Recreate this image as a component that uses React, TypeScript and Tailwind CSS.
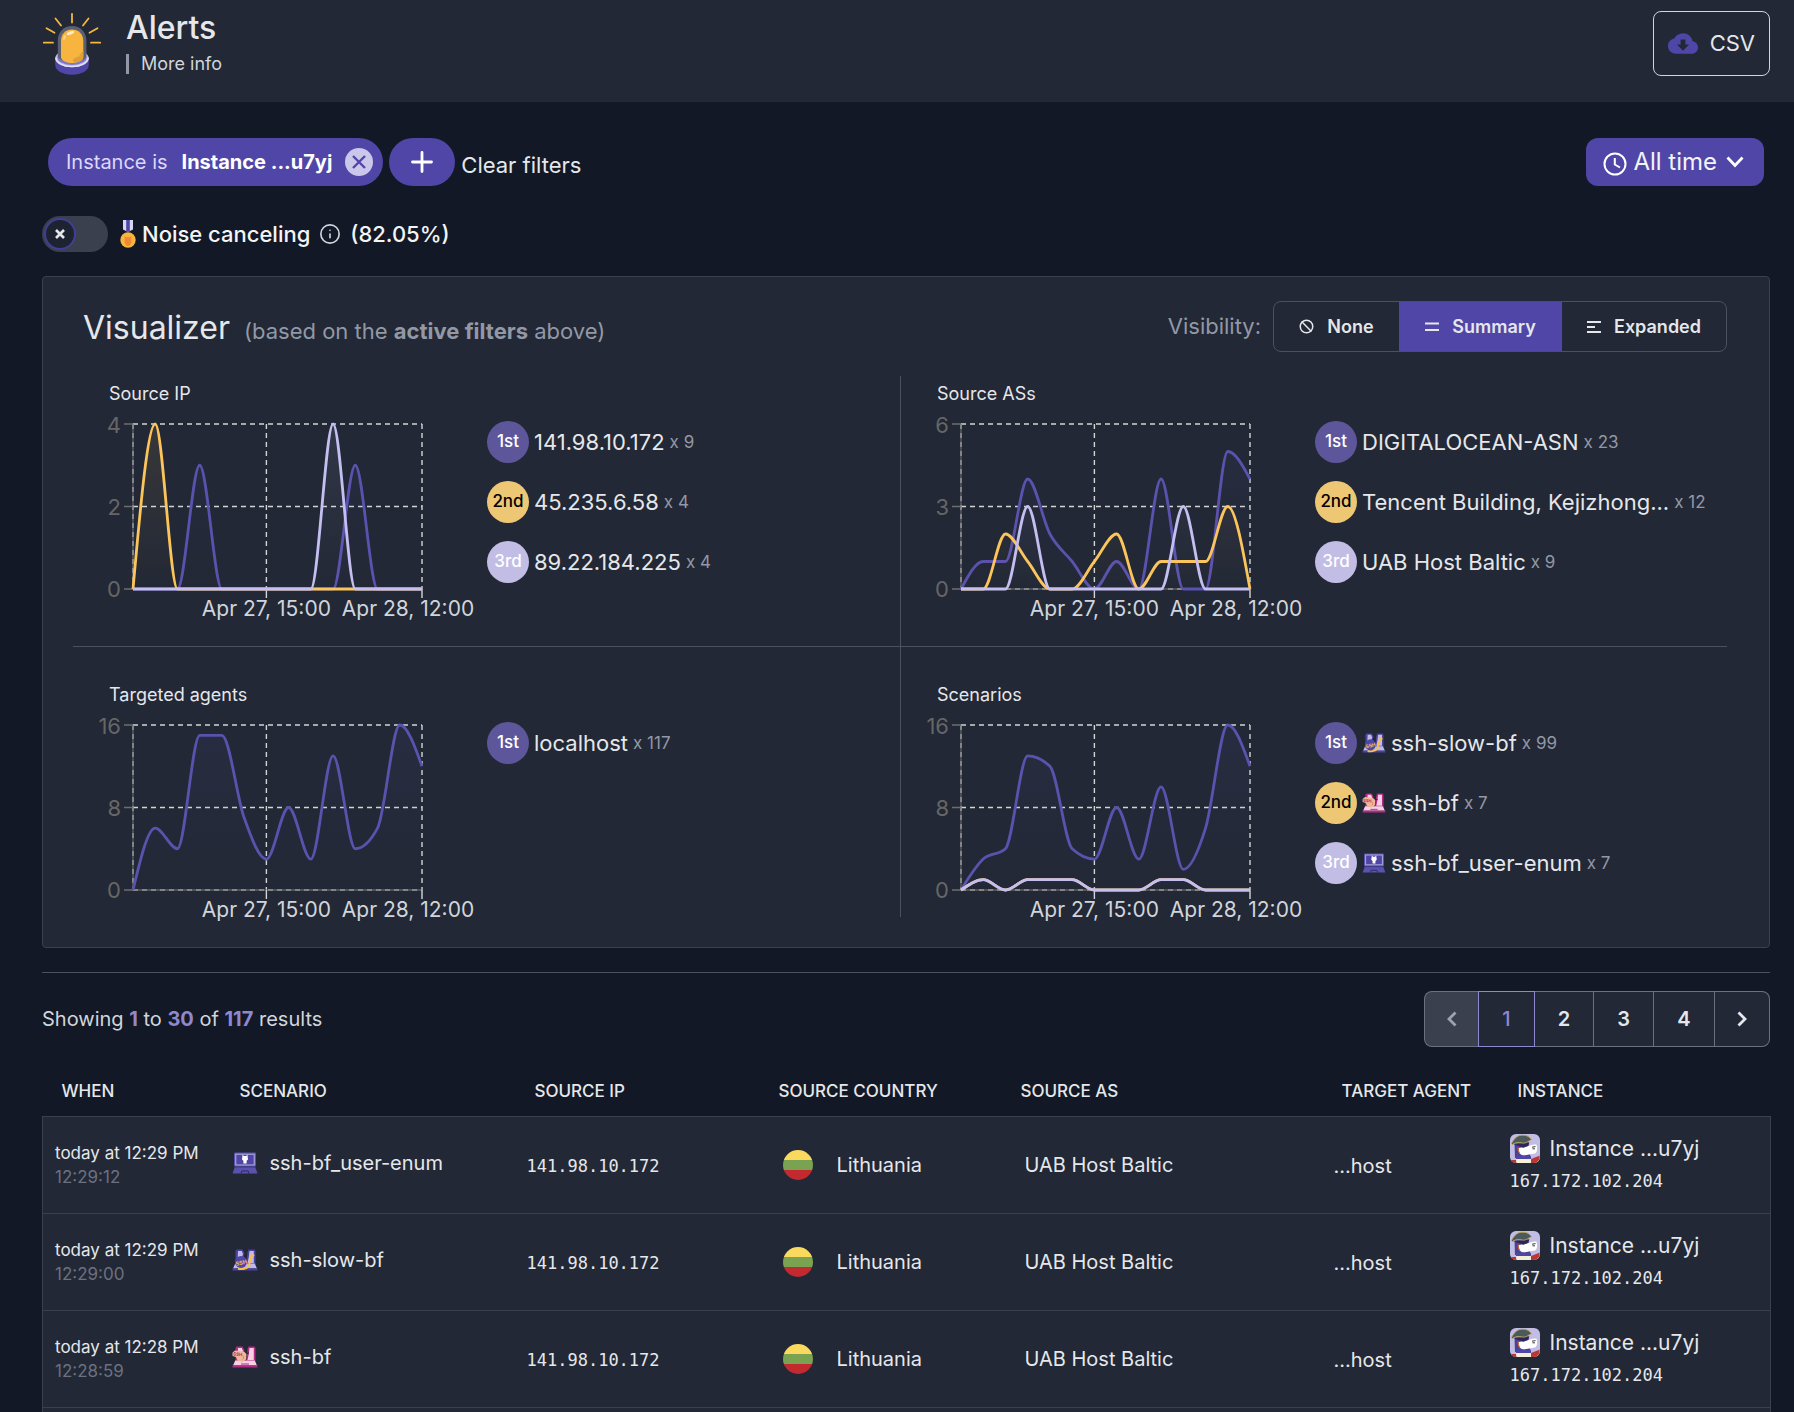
import React, { useState } from "react";
import { LuBan, LuInfo } from "react-icons/lu";

const PURPLE = "#5b52ad";
const GOLD = "#fbc55b";
const LAVENDER = "#c4bff0";

function SirenLogo() {
  return (
    <svg width="60" height="64" viewBox="42 12 60 64" aria-hidden="true">
      <g stroke="#f6b73f" strokeWidth="1.8" strokeLinecap="round">
        <path d="M72 13.800V22.500M55.500 18.500L61 25.500M88.500 18.500L83 25.500M46.500 28.200L54.500 32.800M97.500 28.200L89.500 32.800M43.800 42.700H53M100.200 42.700H91" />
      </g>
      <path d="M55.200 58.500V64.500C55.200 70.500 62.500 74.800 72 74.800S88.800 70.500 88.800 64.500V58.500Z" fill="#5046a8" />
      <ellipse cx="72" cy="58.500" rx="16.800" ry="8.800" fill="#c1bde4" />
      <ellipse cx="72" cy="57.500" rx="14.600" ry="7.600" fill="#7f77c8" />
      <path d="M57.800 56V40.500C57.800 32 64 26 72 26S86.400 32 86.400 40.500V56C86.400 59 80 62 72 62S57.800 59 57.800 56Z" fill="#5a6072" />
      <path d="M61 57V41C61 34 65.500 29.500 72 29.500S83.300 34 83.300 41V57C83.300 60.600 78 63 72 63S61 60.600 61 57Z" fill="#f7b53f" />
      <path d="M83.300 51V57C83.300 60.600 79 62.400 74 62.500C71 59 76 57 79 56.500C80 54 81.500 52 83.300 51Z" fill="#dda037" />
      <ellipse cx="70.500" cy="33" rx="4" ry="1.700" transform="rotate(-22 70.500 33)" fill="#fdebc2" />
      <ellipse cx="64.500" cy="37.500" rx="1.200" ry="2.600" transform="rotate(18 64.500 37.500)" fill="#fbd489" />
      <path d="M55.800 57.500C56.500 63 63 66.600 72 66.600S87.500 63 88.200 57.500" fill="none" stroke="#e3e0f6" strokeWidth="1.400" />
    </svg>
  );
}

function Medal() {
  return (
    <svg width="16" height="28" viewBox="0 0 16 28" aria-hidden="true">
      <path d="M3 0H13V9.500L8 12L3 9.500Z" fill="#d9d5f5" />
      <path d="M6.200 0H9.800V11L8 12L6.200 11Z" fill="#5046a8" />
      <circle cx="8" cy="20" r="7.700" fill="#f9b53c" />
      <path d="M4.800 16L6.500 17.300H9.500L11.200 16L11.400 22C11 24.500 9.500 26 8 26S5 24.500 4.600 22Z" fill="#ee8a33" />
    </svg>
  );
}

function CloudDownload() {
  return (
    <svg width="30" height="21" viewBox="0 0 30 21" aria-hidden="true">
      <path
        d="M24.600 8.200C23.800 3.600 19.800 0.300 15 0.300C11.200 0.300 7.900 2.400 6.300 5.600C2.700 6.200 0 9.300 0 13C0 17.200 3.400 20.700 7.600 20.700H23.700C27.200 20.700 30 17.900 30 14.400C30 11.100 27.600 8.500 24.600 8.200Z"
        fill="#5046a8"
      />
      <path d="M12.600 6.500H17.400V11.500H21L15 17.700L9 11.500H12.600Z" fill="#222835" />
    </svg>
  );
}

type ScenarioKind = "ssh-bf_user-enum" | "ssh-slow-bf" | "ssh-bf";

function ScenarioIcon({ kind, width = 26 }: { kind: ScenarioKind; width?: number }) {
  const height = Math.round((width * 22) / 26);
  if (kind === "ssh-bf_user-enum") {
    return (
      <svg width={width} height={height} viewBox="0 0 26 22" className="shrink-0" aria-hidden="true">
        <rect x="2" y="0.500" width="22" height="14" rx="0.800" fill="#5b52ad" />
        <rect x="3.800" y="2.200" width="18.400" height="10.800" fill="#4f46a5" stroke="#b5b0e6" strokeWidth="1" />
        <path d="M10.600 2.600L11.800 4H14.200L15.400 2.600L16 7.500L14.600 8.800V11.500H11.400V8.800L10 7.500Z" fill="#fff" />
        <path d="M3 14.500H23L25.500 21.500H0.500Z" fill="#5b52ad" />
        <path d="M9 21.500L9.800 19H16.200L17 21.500" fill="none" stroke="#2c2a63" strokeWidth="1" />
        <path d="M2.500 15H23.500" stroke="#39327f" strokeWidth="0.800" />
      </svg>
    );
  }
  const pink = kind === "ssh-bf";
  const edge = pink ? "#b02a86" : "#4b4299";
  const fill = pink ? "#f6cfe0" : "#bfbaeb";
  return (
    <svg width={width} height={height} viewBox="0 0 26 22" className="shrink-0" aria-hidden="true">
      <path d="M4.500 0.500H10.500L12.500 4L11.500 7L13 11V15.500H3.500V2Z" fill={edge} />
      <path d="M15.500 3L16.500 0.500H22.500L23.500 2V15.500H14L15 9Z" fill={edge} />
      <path d="M6 2H9.800L11 5L10 8L12 14H5.500Z" fill={fill} />
      <path d="M17.500 2H21.800V14H15.500L16.800 8Z" fill={fill} />
      <path d="M3.200 14.500H22.800L25 19.500H1Z" fill={fill} />
      <path d="M0.500 19.300H25.500V21.500H0.500Z" fill={edge} />
      {pink ? (
        <g>
          <path d="M0.500 6.500L3 4.500L12 5.500L14.500 8L14 13.500L10.500 16L5.500 14.500L4 11L0.500 10Z" fill="#eeb795" />
          <path d="M10.500 9.500C12 10 12 12.500 10.500 13.500" fill="none" stroke="#c77a6c" strokeWidth="0.800" />
          <path d="M9 18H17" stroke="#b02a86" strokeWidth="1" />
          <text x="1" y="9.600" fontSize="4.500" fontWeight="700" fill="#b0306f" transform="rotate(5 1 9)">SSH</text>
          <path d="M14.500 7.500L17 7" stroke="#222835" strokeWidth="1" />
        </g>
      ) : (
        <g>
          <path d="M6 19.800C9 20.500 14 20 16 18C18.500 15.500 17.500 9 19.500 8L19 5.500M19.500 8L22 5.500" fill="none" stroke="#f8bf4e" strokeWidth="2" />
          <circle cx="9" cy="13" r="6" fill="#5046a8" />
          <text x="3.600" y="15.800" fontSize="5.500" fontWeight="700" fill="#f8bf4e" transform="rotate(-14 9 14)">SSH</text>
        </g>
      )}
    </svg>
  );
}

function Avatar() {
  return (
    <svg width="30" height="29" viewBox="0 0 30 29" className="shrink-0 rounded-md" aria-hidden="true">
      <rect width="30" height="29" fill="#c1bde4" />
      <path d="M4.500 9L18.500 8L20.500 24H5Z" fill="#4a4392" />
      <path d="M6 22H21V26H6Z" fill="#4f46a5" />
      <path d="M8.800 14C8.500 19 10.500 21.500 15 21.200L25 19.500C27.500 18 27.600 13.500 26.500 10.800C24 10 20 11.500 17 12.500Z" fill="#fff" />
      <path d="M8.200 13.500C8 16 8.600 18.500 9.800 20" fill="none" stroke="#d8673f" strokeWidth="1.200" />
      <path d="M3.500 10.500L19.500 8.500L17.500 12L13.500 13.800L9 12Z" fill="#2b2757" />
      <path d="M1.500 9.500C4.500 3.500 8.500 0.800 13 1.200C17 1 19.500 3 21.500 5.500C18 7.500 15.500 9.800 12.500 9C9 8.200 5 8.500 2.500 10.500Z" fill="#4b5b5c" stroke="#c3a15a" strokeWidth="0.900" />
      <path d="M22 13.200L25.500 12.600M22.500 14.800H25" stroke="#222" strokeWidth="0.900" />
      <path d="M0 26H6L7 29H0Z" fill="#b8383a" />
      <path d="M6 25H21.500V29H6.500Z" fill="#f4efd8" />
      <path d="M21 25L30 21.500V29H21Z" fill="#b8383a" />
      <path d="M30 21.500V25.500L27 29" fill="none" stroke="#e0a84a" strokeWidth="1.200" />
    </svg>
  );
}

function Flag() {
  return (
    <span className="flex size-[30px] shrink-0 flex-col overflow-hidden rounded-full" aria-hidden="true">
      <span className="flex-1 bg-[#f9da5e]" />
      <span className="flex-1 bg-[#79a350]" />
      <span className="flex-1 bg-[#c32a30]" />
    </span>
  );
}

/* Monotone cubic interpolation through evenly spaced samples. */
function monotonePath(pts: [number, number][]): string {
  const n = pts.length;
  const slope: number[] = [];
  for (let i = 0; i < n - 1; i++) slope.push((pts[i + 1][1] - pts[i][1]) / (pts[i + 1][0] - pts[i][0]));
  const t: number[] = new Array(n).fill(0);
  for (let i = 1; i < n - 1; i++) {
    const a = slope[i - 1];
    const b = slope[i];
    t[i] = (Math.sign(a) + Math.sign(b)) * Math.min(Math.abs(a), Math.abs(b), 0.5 * Math.abs((a + b) / 2)) || 0;
  }
  t[0] = (3 * slope[0] - t[1]) / 2;
  t[n - 1] = (3 * slope[n - 2] - t[n - 2]) / 2;
  let d = `M${pts[0][0]},${pts[0][1]}`;
  for (let i = 0; i < n - 1; i++) {
    const dx = (pts[i + 1][0] - pts[i][0]) / 3;
    d += `C${pts[i][0] + dx},${pts[i][1] + dx * t[i]} ${pts[i + 1][0] - dx},${pts[i + 1][1] - dx * t[i + 1]} ${pts[i + 1][0]},${pts[i + 1][1]}`;
  }
  return d;
}

type Series = { color: string; values: number[] };

function Chart({ id, max, series }: { id: string; max: number; series: Series[] }) {
  const x0 = 60;
  const x1 = 349;
  const y0 = 185;
  const y1 = 20;
  const step = (x1 - x0) / 13;
  const xm = x0 + 6 * step;
  const ym = (y0 + y1) / 2;
  return (
    <svg width="414" height="212" viewBox="0 0 414 212" className="shrink-0 overflow-visible" role="img" aria-label={`${id} over time`}>
      <g fill="none" stroke="#d4d4d4" strokeWidth="1.400" strokeDasharray="5 4">
        <path d={`M${x0} ${y1}H${x1}M${x0} ${ym}H${x1}M${x0} ${y0}H${x1}`} />
        <path d={`M${x0} ${y1}V${y0}M${xm} ${y1}V${y0}M${x1} ${y1}V${y0}`} />
      </g>
      <g fill="none" stroke="#6e6e6e" strokeWidth="1.400">
        <path d={`M${x0} ${y1}V${y0}H${x1}`} strokeOpacity="0.800" />
        <path d={`M${x0 - 9} ${y1}H${x0}M${x0 - 9} ${ym}H${x0}M${x0 - 9} ${y0}H${x0}`} />
      </g>
      <path d={`M${xm} ${y0}V${y0 + 9}M${x1} ${y0}V${y0 + 9}`} stroke="#d1d5db" strokeWidth="1.400" />
      {series.map((s, i) => {
        const pts = s.values.map((v, k): [number, number] => [x0 + k * step, y0 - ((y0 - y1) * v) / max]);
        const d = monotonePath(pts);
        const gid = `${id.replace(/\s/g, "-")}-${i}`;
        return (
          <g key={gid}>
            <linearGradient id={gid} x1="0" y1={y1} x2="0" y2={y0} gradientUnits="userSpaceOnUse">
              <stop offset="0" stopColor={s.color} stopOpacity="0.100" />
              <stop offset="1" stopColor={s.color} stopOpacity="0" />
            </linearGradient>
            <path d={`${d}V${y0}H${x0}Z`} fill={`url(#${gid})`} />
            <path d={d} fill="none" stroke={s.color} strokeWidth="2.800" />
          </g>
        );
      })}
      <g fontSize="22" fill="#666" textAnchor="end">
        <text x={x0 - 12} y={y1 + 9}>{max}</text>
        <text x={x0 - 12} y={ym + 8}>{max / 2}</text>
        <text x={x0 - 12} y={y0 + 8}>0</text>
      </g>
      <g fontSize="21" fill="#d1d5db" textAnchor="middle">
        <text x={xm} y="212">Apr 27, 15:00</text>
        <text x={x1 - 14} y="212">Apr 28, 12:00</text>
      </g>
    </svg>
  );
}

type Rank = { name: string; count: number; icon?: ScenarioKind };

const badgeStyles = [
  { label: "1st", cls: "bg-[#5e569b] text-white" },
  { label: "2nd", cls: "bg-[#edc774] text-black" },
  { label: "3rd", cls: "bg-[#c1bde4] text-white" },
];

function Panel({ title, max, series, ranks, className }: { title: string; max: number; series: Series[]; ranks: Rank[]; className: string }) {
  return (
    <section className={className}>
      <h3 className="pl-9 text-[18px] leading-5 text-gray-200">{title}</h3>
      <div className="flex">
        <Chart id={title} max={max} series={series} />
        <ol className="flex min-w-0 flex-col gap-[18px] pt-[17px]">
          {ranks.map((r, i) => (
            <li key={r.name} className="flex min-w-0 items-center gap-[5px]">
              <span className={`grid size-[42px] shrink-0 place-items-center rounded-full text-[17px] font-medium ${badgeStyles[i].cls}`}>
                {badgeStyles[i].label}
              </span>
              {r.icon && <ScenarioIcon kind={r.icon} width={24} />}
              <span className="truncate text-[22px] leading-7 text-gray-200">{r.name}</span>
              <span className="shrink-0 text-[17px] leading-7 text-[#9298a6]">x {r.count}</span>
            </li>
          ))}
        </ol>
      </div>
    </section>
  );
}

function Filters() {
  return (
    <div className="flex items-center justify-between pr-[6px] pl-[6px]">
      <div className="flex items-center gap-[6px]">
        <div className="flex h-12 items-center rounded-full bg-[#5046a8] pr-[10px] pl-[18px] text-[20px] text-[#dcd8f8]">
          Instance is
          <strong className="ml-[14px] font-bold text-white">Instance ...u7yj</strong>
          <button type="button" aria-label="Remove filter" className="ml-[13px] grid size-7 place-items-center rounded-full bg-[#cbc7ea]">
            <svg width="14" height="14" viewBox="0 0 14 14" stroke="#5046a8" strokeWidth="2.400" aria-hidden="true">
              <path d="M1 1L13 13M13 1L1 13" />
            </svg>
          </button>
        </div>
        <button type="button" aria-label="Add filter" className="grid h-12 w-[66px] place-items-center rounded-full bg-[#5046a8]">
          <svg width="22" height="22" viewBox="0 0 22 22" stroke="#fff" strokeWidth="2.800" strokeLinecap="round" aria-hidden="true">
            <path d="M11 1.500V20.500M1.500 11H20.500" />
          </svg>
        </button>
        <button type="button" className="pt-[6px] text-[22px] text-gray-200">Clear filters</button>
      </div>
      <button type="button" aria-haspopup="menu" className="flex h-12 items-center rounded-xl bg-[#5046a8] pr-5 pl-[17px] text-[24px] text-gray-100">
        <svg width="24" height="24" viewBox="0 0 24 24" fill="none" stroke="#fff" strokeWidth="2" className="mt-1" aria-hidden="true">
          <circle cx="12" cy="12" r="10.500" />
          <path d="M11.800 6V12.500L17 15.500" />
        </svg>
        <span className="ml-[6px]">All time</span>
        <svg width="18" height="12" viewBox="0 0 18 12" fill="none" stroke="#fff" strokeWidth="2.800" className="ml-[9px]" aria-hidden="true">
          <path d="M1.500 1.500L9 9.500L16.500 1.500" />
        </svg>
      </button>
    </div>
  );
}

function NoiseToggle() {
  const [on, setOn] = useState(false);
  return (
    <label className="mt-[30px] flex items-center text-[22px] leading-9 font-medium text-gray-100">
      <input type="checkbox" role="switch" checked={on} onChange={(e) => setOn(e.target.checked)} className="peer sr-only" />
      <span className="flex h-9 w-[66px] shrink-0 items-center rounded-full bg-[#3b404f] px-[2px] peer-checked:justify-end">
        <span className="grid size-8 place-items-center rounded-full border-2 border-[#453d95] bg-[#1d2331]">
          <svg width="10" height="10" viewBox="0 0 10 10" stroke="#e5e7eb" strokeWidth="2.600" aria-hidden="true">
            <path d="M1 1L9 9M9 1L1 9" />
          </svg>
        </span>
      </span>
      <span className="mr-[6px] ml-3">
        <Medal />
      </span>
      Noise canceling
      <LuInfo className="mx-[9px] size-[22px] text-gray-300" strokeWidth={1.8} aria-hidden="true" />
      (82.05%)
    </label>
  );
}

function VisibilityPicker() {
  const base = "flex items-center gap-[13px] text-[18px] font-semibold text-gray-200";
  return (
    <div className="flex items-center">
      <span className="mr-3 text-[22px] text-[#9298a6]">Visibility:</span>
      <div role="group" aria-label="Visibility" className="flex h-[51px] overflow-hidden rounded-lg border border-[#4b5160]">
        <button type="button" aria-pressed="false" className={`${base} w-[125px] justify-center`}>
          <LuBan className="size-[15px]" strokeWidth={2.4} aria-hidden="true" />
          None
        </button>
        <button type="button" aria-pressed="true" className={`${base} w-[163px] justify-center bg-[#5046a8]`}>
          <svg width="14" height="10" viewBox="0 0 14 10" stroke="currentColor" strokeWidth="1.800" aria-hidden="true">
            <path d="M0 1.500H14M0 8H14" />
          </svg>
          Summary
        </button>
        <button type="button" aria-pressed="false" className={`${base} w-[164px] justify-center`}>
          <svg width="14" height="12" viewBox="0 0 14 12" stroke="currentColor" strokeWidth="1.800" aria-hidden="true">
            <path d="M0 1H14M0 6H8M0 11H14" />
          </svg>
          Expanded
        </button>
      </div>
    </div>
  );
}

const lone = (entries: Record<number, number>) => Array.from({ length: 14 }, (_, i) => entries[i] ?? 0);
const minor = [0, 1, 0, 1, 1, 1, 0, 0, 0, 1, 1, 0, 0, 0];

function Visualizer() {
  return (
    <section className="mt-6 rounded-sm border border-[#3a404e] bg-[#222835] pt-6 pr-[42px] pb-[30px] pl-[30px]">
      <div className="mb-6 flex items-center justify-between">
        <h2 className="flex items-baseline pt-[6px] pl-[10px] text-[32px] leading-10 text-gray-200">
          Visualizer
          <span className="ml-[14px] text-[22px] text-[#9298a6]">
            (based on the <strong className="font-bold">active filters</strong> above)
          </span>
        </h2>
        <VisibilityPicker />
      </div>
      <div className="grid grid-cols-2">
        <Panel
          className="border-b border-[#4b5160] pt-2 pb-[30px]"
          title="Source IP"
          max={4}
          series={[
            { color: PURPLE, values: lone({ 3: 3, 10: 3 }) },
            { color: GOLD, values: lone({ 1: 4 }) },
            { color: LAVENDER, values: lone({ 9: 4 }) },
          ]}
          ranks={[
            { name: "141.98.10.172", count: 9 },
            { name: "45.235.6.58", count: 4 },
            { name: "89.22.184.225", count: 4 },
          ]}
        />
        <Panel
          className="border-b border-l border-[#4b5160] pt-2 pb-[30px]"
          title="Source ASs"
          max={6}
          series={[
            { color: PURPLE, values: [0, 1, 1, 4, 2, 1, 0, 1, 0, 4, 0, 0, 5, 4] },
            { color: GOLD, values: [0, 0, 2, 1, 0, 0, 1, 2, 0, 1, 1, 1, 3, 0] },
            { color: LAVENDER, values: lone({ 3: 3, 10: 3 }) },
          ]}
          ranks={[
            { name: "DIGITALOCEAN-ASN", count: 23 },
            { name: "Tencent Building, Kejizhong...", count: 12 },
            { name: "UAB Host Baltic", count: 9 },
          ]}
        />
        <Panel
          className="pt-[38px]"
          title="Targeted agents"
          max={16}
          series={[{ color: PURPLE, values: [0, 6, 4, 15, 15, 7, 3, 8, 3, 13, 4, 6, 16, 12] }]}
          ranks={[{ name: "localhost", count: 117 }]}
        />
        <Panel
          className="border-l border-[#4b5160] pt-[38px]"
          title="Scenarios"
          max={16}
          series={[
            { color: PURPLE, values: [0, 3, 4, 13, 12, 4, 3, 8, 3, 10, 2, 6, 16, 12] },
            { color: GOLD, values: minor },
            { color: LAVENDER, values: minor },
          ]}
          ranks={[
            { name: "ssh-slow-bf", count: 99, icon: "ssh-slow-bf" },
            { name: "ssh-bf", count: 7, icon: "ssh-bf" },
            { name: "ssh-bf_user-enum", count: 7, icon: "ssh-bf_user-enum" },
          ]}
        />
      </div>
    </section>
  );
}

function Chevron({ left = false }: { left?: boolean }) {
  return (
    <svg width="10" height="16" viewBox="0 0 10 16" fill="none" stroke="currentColor" strokeWidth="2.800" aria-hidden="true">
      <path d={left ? "M8.500 1.500L2 8L8.500 14.500" : "M1.500 1.500L8 8L1.500 14.500"} />
    </svg>
  );
}

function Pagination() {
  const cell = "border-y border-r border-[#6b7180] grid place-items-center";
  return (
    <nav aria-label="Pagination" className="flex h-14 text-[20px] font-semibold text-gray-200">
      <button
        type="button"
        aria-label="Previous page"
        disabled
        className="grid w-[54px] place-items-center rounded-l-lg border-y border-l border-[#6b7180] bg-[#3b404f] text-[#9ca3af]"
      >
        <Chevron left />
      </button>
      <button type="button" aria-current="page" className="w-[57px] border border-[#8f87cf] bg-[#222835] font-medium text-[#8f87cf]">1</button>
      <button type="button" className={`${cell} w-[59px] bg-[#222835]`}>2</button>
      <button type="button" className={`${cell} w-[60px] bg-[#222835]`}>3</button>
      <button type="button" className={`${cell} w-[61px] bg-[#222835]`}>4</button>
      <button type="button" aria-label="Next page" className={`${cell} w-[55px] rounded-r-lg bg-[#222835]`}>
        <Chevron />
      </button>
    </nav>
  );
}

const rows: { when: string; time: string; scenario: ScenarioKind }[] = [
  { when: "today at 12:29 PM", time: "12:29:12", scenario: "ssh-bf_user-enum" },
  { when: "today at 12:29 PM", time: "12:29:00", scenario: "ssh-slow-bf" },
  { when: "today at 12:28 PM", time: "12:28:59", scenario: "ssh-bf" },
];

const columns = ["When", "Scenario", "Source IP", "Source country", "Source AS", "Target agent", "Instance"];

function AlertsTable() {
  return (
    <table className="mt-[18px] w-full table-fixed border-collapse text-left text-gray-200">
      <colgroup>
        <col className="w-[178px]" />
        <col className="w-[295px]" />
        <col className="w-[244px]" />
        <col className="w-[242px]" />
        <col className="w-[321px]" />
        <col className="w-[176px]" />
        <col className="w-[272px]" />
      </colgroup>
      <thead>
        <tr className="h-[51px]">
          {columns.map((c) => (
            <th key={c} scope="col" className="pt-[2px] pl-[19px] text-[17px] font-medium whitespace-nowrap uppercase">{c}</th>
          ))}
        </tr>
      </thead>
      <tbody>
        {rows.map((r) => (
          <tr key={r.time} className="h-[97px] border border-[#3a404e] bg-[#222835]">
            <td className="pl-3 text-[17px] leading-6 whitespace-nowrap">
              {r.when}
              <div className="text-[#6b7180]">{r.time}</div>
            </td>
            <td className="pb-1 pl-[11px]">
              <div className="flex items-center gap-3 text-[20px]">
                <ScenarioIcon kind={r.scenario} />
                {r.scenario}
              </div>
            </td>
            <td className="pt-1 pl-[11px] font-['DejaVu_Sans_Mono',monospace] text-[17px]">141.98.10.172</td>
            <td className="pl-[23px]">
              <div className="flex items-center gap-6 text-[20px]">
                <Flag />
                Lithuania
              </div>
            </td>
            <td className="pl-[23px] text-[20px]">UAB Host Baltic</td>
            <td className="pt-[2px] pl-[11px] text-[20px]">...host</td>
            <td className="pl-[11px]">
              <div className="flex items-center gap-[10px] text-[21px] leading-7">
                <Avatar />
                Instance ...u7yj
              </div>
              <div className="mt-1 font-['DejaVu_Sans_Mono',monospace] text-[17px] leading-7">167.172.102.204</div>
            </td>
          </tr>
        ))}
        <tr aria-hidden="true" className="h-[97px] border border-[#3a404e] bg-[#222835]">
          <td colSpan={columns.length} />
        </tr>
      </tbody>
    </table>
  );
}

export default function App() {
  return (
    <div className="h-screen overflow-y-auto bg-[#121825] font-[Inter,sans-serif] [scrollbar-width:none]">
      <header className="flex h-[102px] items-start justify-between bg-[#222835] pr-6 pl-[42px]">
        <div className="flex pt-3">
          <SirenLogo />
          <div className="ml-6">
            <h1 className="text-[32px] leading-8 font-medium text-gray-200">Alerts</h1>
            <a href="#more" className="mt-[10px] block border-l-3 border-[#9298a6] pl-3 text-[18px] leading-5 text-gray-300">More info</a>
          </div>
        </div>
        <button type="button" className="mt-[11px] flex h-[65px] items-center gap-3 rounded-lg border border-gray-300 px-[14px] text-[22px] text-gray-200">
          <CloudDownload />
          CSV
        </button>
      </header>
      <main className="pt-9 pr-6 pl-[42px]">
        <Filters />
        <NoiseToggle />
        <Visualizer />
        <hr className="mt-6 border-[#4b5160]" />
        <div className="mt-[18px] flex items-center justify-between">
          <p className="text-[20px] text-gray-300">
            Showing <strong className="font-bold text-[#8f87cf]">1</strong> to <strong className="font-bold text-[#8f87cf]">30</strong> of{" "}
            <strong className="font-bold text-[#8f87cf]">117</strong> results
          </p>
          <Pagination />
        </div>
        <AlertsTable />
      </main>
    </div>
  );
}
